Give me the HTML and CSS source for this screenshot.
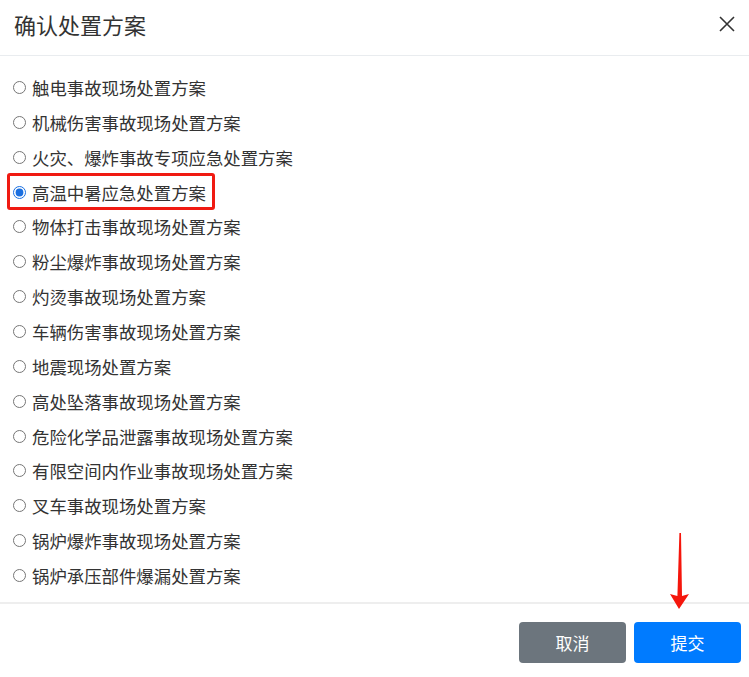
FILE: index.html
```html
<!DOCTYPE html>
<html lang="zh-CN">
<head>
  <meta charset="UTF-8" />
  <title>确认处置方案</title>
  <link rel="stylesheet" href="styles.css">
</head>
<body>
  <div class="modal">
    <div class="modal-header">
      <h5 class="modal-title">确认处置方案</h5>
      <button class="close" type="button" aria-label="关闭">
        <svg width="16" height="16" viewBox="0 0 16 16"><path d="M1 1L15 15M15 1L1 15" stroke="#333" stroke-width="1.6" fill="none"/></svg>
      </button>
    </div>

    <div class="modal-body">
      <label class="option"><input type="radio" name="plan"> 触电事故现场处置方案</label>
      <label class="option"><input type="radio" name="plan"> 机械伤害事故现场处置方案</label>
      <label class="option"><input type="radio" name="plan"> 火灾、爆炸事故专项应急处置方案</label>
      <label class="option marked"><input type="radio" name="plan" checked> 高温中暑应急处置方案</label>
      <label class="option"><input type="radio" name="plan"> 物体打击事故现场处置方案</label>
      <label class="option"><input type="radio" name="plan"> 粉尘爆炸事故现场处置方案</label>
      <label class="option"><input type="radio" name="plan"> 灼烫事故现场处置方案</label>
      <label class="option"><input type="radio" name="plan"> 车辆伤害事故现场处置方案</label>
      <label class="option"><input type="radio" name="plan"> 地震现场处置方案</label>
      <label class="option"><input type="radio" name="plan"> 高处坠落事故现场处置方案</label>
      <label class="option"><input type="radio" name="plan"> 危险化学品泄露事故现场处置方案</label>
      <label class="option"><input type="radio" name="plan"> 有限空间内作业事故现场处置方案</label>
      <label class="option"><input type="radio" name="plan"> 叉车事故现场处置方案</label>
      <label class="option"><input type="radio" name="plan"> 锅炉爆炸事故现场处置方案</label>
      <label class="option"><input type="radio" name="plan"> 锅炉承压部件爆漏处置方案</label>
    </div>

    <div class="modal-footer">
      <button class="btn btn-secondary" type="button">取消</button>
      <button class="btn btn-primary" type="button">提交</button>
    </div>

    <!-- 标注箭头 -->
    <svg class="arrow" width="24" height="80" viewBox="0 0 24 80">
      <path d="M13 0 L14 63 L21 61 L11 76 L2 61 L9.4 63 L11.4 0 Z" fill="#f5160c"/>
    </svg>
  </div>
</body>
</html>
```

FILE: styles.css
```css
body {
  margin: 0;
  font-family: "Noto Sans CJK SC", "Noto Sans", sans-serif;
  color: #333;
  background: #fff;
}
.modal {
  position: relative;
  width: 749px;
  height: 677px;
}
.modal-header {
  height: 55px;
  display: flex;
  align-items: center;
  justify-content: space-between;
  padding: 0 14px;
  border-bottom: 1px solid #e9ecef;
}
.modal-title {
  margin: 0 0 8px;
  font-size: 22px;
  font-weight: normal;
  color: #333;
}
.close {
  border: none;
  background: none;
  padding: 0;
  margin: 0 0 8px;
  width: 16px;
  height: 16px;
  cursor: pointer;
}
.modal-body {
  padding: 14px 0 9px;
  display: flex;
  flex-direction: column;
}
.option {
  position: relative;
  display: flex;
  align-items: center;
  width: fit-content;
  height: 34.86px;
  padding-left: 13px;
  font-size: 17.4px;
  color: #333;
}
.option input {
  width: 13px;
  height: 13px;
  margin: 0 6px 0 0;
  accent-color: #1a6fe0;
}
.marked::after {
  content: "";
  position: absolute;
  left: 7px;
  right: -9px;
  top: -2px;
  bottom: -1px;
  border: 3px solid #f01a12;
  border-radius: 3px;
}
.modal-footer {
  border-top: 2px solid #eeeeee;
  display: flex;
  justify-content: flex-end;
  gap: 8px;
  padding: 18px 8px 0;
}
.btn {
  width: 107px;
  height: 41px;
  border: none;
  border-radius: 4px;
  color: #fff;
  font-family: inherit;
  font-size: 17px;
  cursor: pointer;
}
.btn-secondary {
  background-color: #6c757d;
}
.btn-primary {
  background-color: #007bff;
}
.arrow {
  position: absolute;
  left: 668px;
  top: 533px;
}
```
